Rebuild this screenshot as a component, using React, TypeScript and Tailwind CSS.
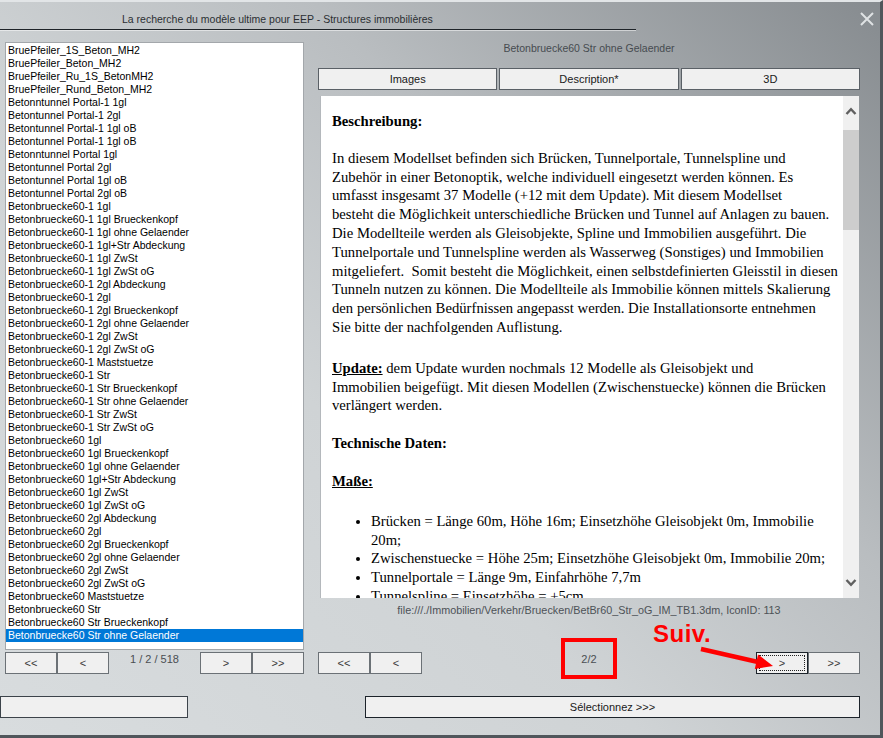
import React from 'react';

const modelNames = [
  'BruePfeiler_1S_Beton_MH2',
  'BruePfeiler_Beton_MH2',
  'BruePfeiler_Ru_1S_BetonMH2',
  'BruePfeiler_Rund_Beton_MH2',
  'Betonntunnel Portal-1 1gl',
  'Betontunnel Portal-1 2gl',
  'Betontunnel Portal-1 1gl oB',
  'Betontunnel Portal-1 1gl oB',
  'Betonntunnel Portal 1gl',
  'Betontunnel Portal 2gl',
  'Betontunnel Portal 1gl oB',
  'Betontunnel Portal 2gl oB',
  'Betonbruecke60-1 1gl',
  'Betonbruecke60-1 1gl Brueckenkopf',
  'Betonbruecke60-1 1gl ohne Gelaender',
  'Betonbruecke60-1 1gl+Str Abdeckung',
  'Betonbruecke60-1 1gl ZwSt',
  'Betonbruecke60-1 1gl ZwSt oG',
  'Betonbruecke60-1 2gl Abdeckung',
  'Betonbruecke60-1 2gl',
  'Betonbruecke60-1 2gl Brueckenkopf',
  'Betonbruecke60-1 2gl ohne Gelaender',
  'Betonbruecke60-1 2gl ZwSt',
  'Betonbruecke60-1 2gl ZwSt oG',
  'Betonbruecke60-1 Maststuetze',
  'Betonbruecke60-1 Str',
  'Betonbruecke60-1 Str Brueckenkopf',
  'Betonbruecke60-1 Str ohne Gelaender',
  'Betonbruecke60-1 Str ZwSt',
  'Betonbruecke60-1 Str ZwSt oG',
  'Betonbruecke60 1gl',
  'Betonbruecke60 1gl Brueckenkopf',
  'Betonbruecke60 1gl ohne Gelaender',
  'Betonbruecke60 1gl+Str Abdeckung',
  'Betonbruecke60 1gl ZwSt',
  'Betonbruecke60 1gl ZwSt oG',
  'Betonbruecke60 2gl Abdeckung',
  'Betonbruecke60 2gl',
  'Betonbruecke60 2gl Brueckenkopf',
  'Betonbruecke60 2gl ohne Gelaender',
  'Betonbruecke60 2gl ZwSt',
  'Betonbruecke60 2gl ZwSt oG',
  'Betonbruecke60 Maststuetze',
  'Betonbruecke60 Str',
  'Betonbruecke60 Str Brueckenkopf',
  'Betonbruecke60 Str ohne Gelaender',
];

const selectedName = 'Betonbruecke60 Str ohne Gelaender';

// plain grey winforms button
function NavButton({ label, focused = false }: { label: string; focused?: boolean }) {
  return (
    <button
      className={
        'relative h-[22px] w-[52px] bg-[#f0f0f0] text-[11px] leading-none text-[#3a3a3a] border ' +
        (focused ? 'border-[#1c232a]' : 'border-[#6b7176]')
      }
    >
      {focused && <span className="absolute inset-[2px] border border-dotted border-[#222]" />}
      {label}
    </button>
  );
}

function Chevron({ up }: { up: boolean }) {
  return (
    <svg width="12" height="8" viewBox="0 0 12 8" className="block">
      <path
        d={up ? 'M1.5 7 L6 2.2 L10.5 7' : 'M1.5 1 L6 5.8 L10.5 1'}
        fill="none"
        stroke="#606060"
        strokeWidth="2.4"
      />
    </svg>
  );
}

export default function App() {
  return (
    <div className="relative w-[883px] h-[738px] overflow-hidden border-t-2 border-t-[#e2e5e7] border-r-[3px] border-r-[#50565b] border-b-[3px] border-b-[#50565b] bg-[linear-gradient(225deg,#868b8f_0%,#b9bdc0_35%,#cfd3d5_60%,#d8dcde_100%)] font-['Liberation_Sans',Arial,sans-serif] text-black">
      {/* Title bar */}
      <div className="flex h-[27px]">
        <div className="pl-[122px] pt-[10px] text-[10.5px] leading-[14px] text-[#2b2f33] whitespace-nowrap">
          La recherche du modèle ultime pour EEP - Structures immobilières
        </div>
        <svg width="14" height="14" viewBox="0 0 14 14" className="ml-auto mr-[6px] mt-[10px]">
          <path d="M1 1 L13 13 M13 1 L1 13" stroke="#dfe2e4" strokeWidth="2" />
        </svg>
      </div>
      <div className="w-[636px] h-px bg-[#1e2328]" />
      <div className="w-[636px] h-px bg-white/50" />

      <div className="flex">
        {/* Left: model list */}
        <div className="ml-[5px] w-[299px] flex flex-col">
          <div className="mt-[11px] h-[608px] bg-white border border-[#a3a7ab] pt-[1px] overflow-hidden">
            {modelNames.map((name, i) => (
              <div
                key={i}
                className={
                  'h-[13px] leading-[13px] pl-[2px] text-[10.5px] whitespace-nowrap ' +
                  (i === modelNames.length - 1 ? 'bg-[#0078d7] text-white' : '')
                }
              >
                {name}
              </div>
            ))}
          </div>
          <div className="mt-[2px] flex">
            <NavButton label="<<" />
            <NavButton label="<" />
            <div className="flex-1 text-center text-[11px] leading-[13px] pt-[1px] text-[#4a4e52]">1 / 2 / 518</div>
            <NavButton label=">" />
            <NavButton label=">>" />
          </div>
          <button className="mt-[22px] -ml-[5px] w-[188px] h-[22px] bg-[#f0f0f0] border border-[#3c434a]" />
        </div>

        {/* Right: details */}
        <div className="ml-[14px] w-[542px] flex flex-col">
          <div className="h-[37px] pt-[11px] text-center text-[10.5px] leading-[13px] text-[#464b50]">{selectedName}</div>
          <div className="flex gap-[2px] h-[22px]">
            {['Images', 'Description*', '3D'].map(t => (
              <button key={t} className="flex-1 bg-[#f0f0f0] border border-[#5a6066] text-[11px] text-[#1a1a1a]">
                {t}
              </button>
            ))}
          </div>

          <div className="mt-[6px] ml-[2px] w-[539px] h-[502px] flex bg-white border-l border-[#b4b8bc]">
            <div className="flex-1 overflow-hidden pl-[11px] pt-[16px] font-['Liberation_Serif','Times_New_Roman',serif] text-[14.7px] leading-[18.8px] whitespace-nowrap">
              <p className="font-bold">Beschreibung:</p>
              <p className="mt-[18px]">
                In diesem Modellset befinden sich Brücken, Tunnelportale, Tunnelspline und<br />
                Zubehör in einer Betonoptik, welche individuell eingesetzt werden können. Es<br />
                umfasst insgesamt 37 Modelle (+12 mit dem Update). Mit diesem Modellset<br />
                besteht die Möglichkeit unterschiedliche Brücken und Tunnel auf Anlagen zu bauen.<br />
                Die Modellteile werden als Gleisobjekte, Spline und Immobilien ausgeführt. Die<br />
                Tunnelportale und Tunnelspline werden als Wasserweg (Sonstiges) und Immobilien<br />
                mitgeliefert.&nbsp; Somit besteht die Möglichkeit, einen selbstdefinierten Gleisstil in diesen<br />
                Tunneln nutzen zu können. Die Modellteile als Immobilie können mittels Skalierung<br />
                den persönlichen Bedürfnissen angepasst werden. Die Installationsorte entnehmen<br />
                Sie bitte der nachfolgenden Auflistung.
              </p>
              <p className="mt-[22px]">
                <span className="font-bold underline">Update:</span> dem Update wurden nochmals 12 Modelle als Gleisobjekt und<br />
                Immobilien beigefügt. Mit diesen Modellen (Zwischenstuecke) können die Brücken<br />
                verlängert werden.
              </p>
              <p className="mt-[19px] font-bold">Technische Daten:</p>
              <p className="mt-[19px] font-bold underline">Maße:</p>
              <ul className="mt-[21px] list-disc pl-[39px]">
                <li>
                  Brücken = Länge 60m, Höhe 16m; Einsetzhöhe Gleisobjekt 0m, Immobilie<br />
                  20m;
                </li>
                <li>Zwischenstuecke = Höhe 25m; Einsetzhöhe Gleisobjekt 0m, Immobilie 20m;</li>
                <li>Tunnelportale = Länge 9m, Einfahrhöhe 7,7m</li>
                <li>Tunnelspline = Einsetzhöhe = +5cm</li>
              </ul>
            </div>
            {/* scrollbar */}
            <div className="w-[16px] flex flex-col bg-[#f0f0f0]">
              <div className="h-[34px] flex items-center justify-center pb-[4px]">
                <Chevron up />
              </div>
              <div className="h-[100px] bg-[#cdcdcd]" />
              <div className="flex-1" />
              <div className="h-[34px] flex items-center justify-center pt-[4px]">
                <Chevron up={false} />
              </div>
            </div>
          </div>

          <div className="mt-[6px] text-center text-[10.8px] leading-[13px] text-[#4d5257] whitespace-nowrap">
            file:///./Immobilien/Verkehr/Bruecken/BetBr60_Str_oG_IM_TB1.3dm, IconID: 113
          </div>

          <div className="mt-[35px] flex h-[22px]">
            <NavButton label="<<" />
            <NavButton label="<" />
            <div className="flex-1 flex justify-center">
              <div className="relative text-[11px] leading-[13px] pt-[1px] text-[#4a4e52]">
                2/2
                <span className="absolute left-1/2 -translate-x-1/2 -top-[14px] w-[56px] h-[41px] border-4 border-[#ff0000]" />
              </div>
            </div>
            <NavButton label=">" focused />
            <NavButton label=">>" />
          </div>

          <button className="mt-[22px] ml-[47px] w-[495px] h-[22px] bg-[#f0f0f0] border border-[#1c232a] text-[11px] text-[#1a1a1a]">
            Sélectionnez &gt;&gt;&gt;
          </button>
        </div>
      </div>

      {/* red annotation */}
      <div className="absolute left-[653px] top-[620px] text-[24px] leading-none font-bold tracking-[0.5px] text-[#ff0000]">Suiv.</div>
      <svg className="absolute left-[690px] top-[638px]" width="95" height="36" viewBox="0 0 95 36">
        <path d="M11 9 L68 22" stroke="#ff0000" strokeWidth="4.5" />
        <polygon points="83,26 64.8,29 68,14.4" fill="#ff0000" />
      </svg>
    </div>
  );
}
